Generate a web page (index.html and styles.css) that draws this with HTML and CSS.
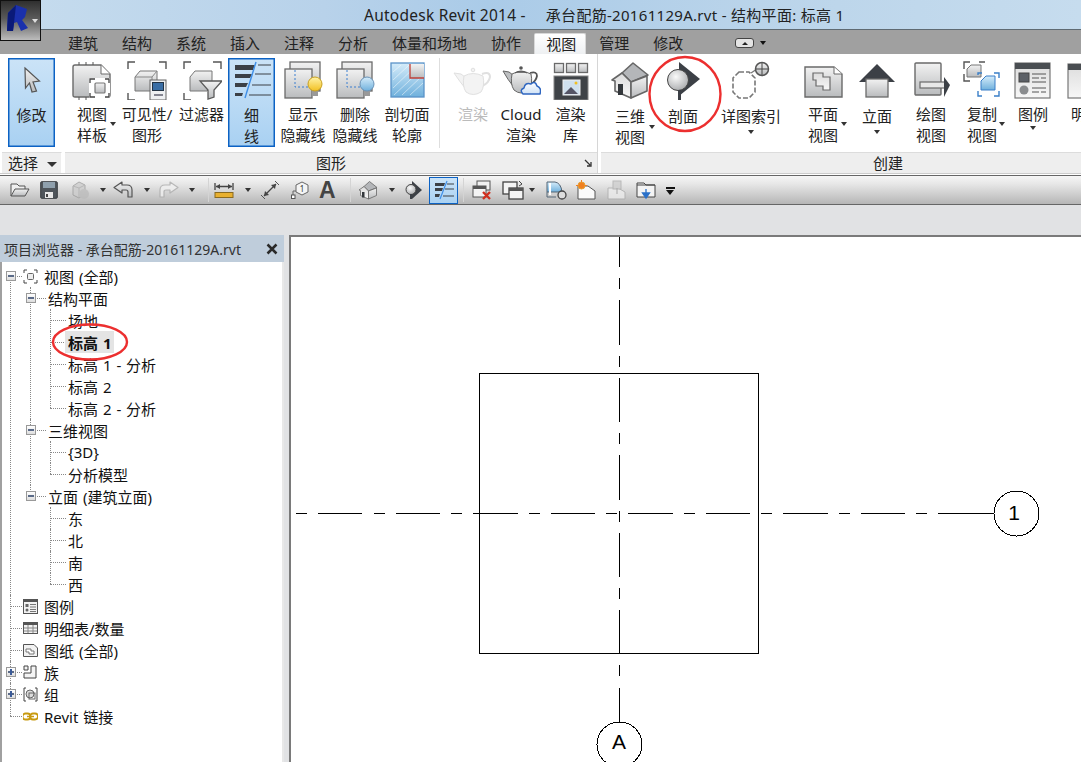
FILE: index.html
```html
<!DOCTYPE html>
<html lang="zh">
<head>
<meta charset="utf-8">
<title>Autodesk Revit 2014</title>
<link rel="stylesheet" href="styles.css">
</head>
<body>
<svg class="defs" aria-hidden="true">
  <defs>
    <linearGradient id="g" x1="0" y1="0" x2="0" y2="1"><stop offset="0" stop-color="#f2f2f2"/><stop offset="1" stop-color="#b9bbbd"/></linearGradient>
    <linearGradient id="gd" x1="0" y1="0" x2="0" y2="1"><stop offset="0" stop-color="#dcdcdc"/><stop offset="1" stop-color="#f7f7f7"/></linearGradient>
    <linearGradient id="gb" x1="0" y1="0" x2="0" y2="1"><stop offset="0" stop-color="#d5ecfa"/><stop offset="1" stop-color="#6fb0dc"/></linearGradient>
    <linearGradient id="gy" x1="0" y1="0" x2="0" y2="1"><stop offset="0" stop-color="#fff3a8"/><stop offset="1" stop-color="#f2c020"/></linearGradient>
    <radialGradient id="gs" cx=".4" cy=".35" r=".7"><stop offset="0" stop-color="#fafafa"/><stop offset="1" stop-color="#a9abad"/></radialGradient>
    <linearGradient id="gc" x1="0" y1="0" x2="0" y2="1"><stop offset="0" stop-color="#ffffff"/><stop offset="1" stop-color="#cfe2f6"/></linearGradient>
    <symbol id="house" viewBox="0 0 40 40">
      <path d="M12 13 23 3 38 15 21 22Z" fill="#b4b6b9" stroke="#666" stroke-width="1.6" stroke-linejoin="round"/>
      <path d="M2 20 12 13 21 22V38L5 31V21Z" fill="url(#gd)" stroke="#666" stroke-width="1.6" stroke-linejoin="round"/>
      <path d="M21 22 37 16V31L21 38Z" fill="url(#g)" stroke="#666" stroke-width="1.6" stroke-linejoin="round"/>
      <rect x="8" y="24" width="5" height="11" fill="#33373b"/>
    </symbol>
  </defs>
</svg>

<header class="titlebar">
  <div class="appbtn">
    <svg width="28" height="30" viewBox="0 0 28 30"><path d="M2 26 3 8 11 0 22 4 20 12 17 15 23 23 16 26 12 17 9 18 8 26Z" fill="#1a30ac"/><path d="M3 8 11 0 10 9 9 18 8 26 2 26Z" fill="#0a1a78"/></svg>
    <span class="caret caret-app"></span>
  </div>
  <div class="title"><span class="t1">Autodesk Revit 2014 -</span><span class="t2">承台配筋-20161129A.rvt - 结构平面: 标高 1</span></div>
</header>

<nav class="tabs">
  <span class="tab">建筑</span><span class="tab">结构</span><span class="tab">系统</span><span class="tab">插入</span><span class="tab">注释</span><span class="tab">分析</span><span class="tab">体量和场地</span><span class="tab">协作</span><span class="tab active">视图</span><span class="tab">管理</span><span class="tab">修改</span>
  <span class="collapse"><span class="collapse-up"></span></span><span class="caret caret-tab"></span>
</nav>

<section class="ribbon">
  <div class="panel p-select">
    <div class="tools pad8">
      <div class="tool w47 on">
        <svg class="ico" width="40" height="40" viewBox="0 0 40 40"><path d="M13 8 27.5 21 21 22 24.5 31 20 32 17.5 23 13.5 28Z" fill="url(#g)" stroke="#555" stroke-width="1.2"/></svg>
        <div class="lbl">修改</div>
      </div>
    </div>
    <div class="plabel">选择 <span class="caret caret-sel"></span></div>
  </div>

  <div class="panel p-graphics">
    <div class="tools pad6">
      <div class="tool w46">
        <svg class="ico" width="40" height="40" viewBox="0 0 40 40"><path d="M3 5H29L38 14V35Q38 37 36 37H3Q1 37 1 35V7Q1 5 3 5Z" fill="url(#g)" stroke="#6a6a6a" stroke-width="1.4"/><path d="M29 5V14H38" fill="#fff" stroke="#6a6a6a"/><path d="M7 2V5M14 2V5M21 2V5M7 37V40M14 37V40" stroke="#555"/><rect x="17" y="18" width="21" height="20" fill="#fff"/><path d="M18 23V19H23M33 19H37V23M37 33V37H33M23 37H18V33" fill="none" stroke="#444" stroke-width="1.3"/><rect x="23" y="23" width="10" height="10" rx="1" fill="url(#g)" stroke="#777" stroke-width="1.2"/></svg>
        <div class="lbl">视图<br>样板</div><span class="caret caret-side c1"></span>
      </div>
      <div class="tool w64">
        <svg class="ico" width="40" height="40" viewBox="0 0 40 40"><path d="M1 9V2H8M32 2H39V9M1 33V40H8" fill="none" stroke="#555" stroke-width="1.4"/><path d="M8 17 13 11H30V26L25 31H8Z" fill="url(#g)" stroke="#777"/><path d="M8 17H25V31M25 17 30 11" fill="none" stroke="#888"/><rect x="23" y="20" width="16" height="20" fill="#eef0f2" stroke="#666"/><rect x="25.500" y="22.500" width="11" height="8" fill="#3a6ea5" stroke="#234"/><path d="M27 35H36" stroke="#556" stroke-width="1.4"/></svg>
        <div class="lbl">可见性/<br>图形</div>
      </div>
      <div class="tool w45">
        <svg class="ico" width="40" height="40" viewBox="0 0 40 40"><path d="M2 9V2H9M31 2H39V9M2 33V40H9" fill="none" stroke="#555" stroke-width="1.4"/><path d="M8 17 13 11H30V26L25 31H8Z" fill="url(#g)" stroke="#777"/><path d="M18 21H40L32 30V37L26 39V30Z" fill="url(#g)" stroke="#5a5a5a" stroke-width="1.3"/></svg>
        <div class="lbl">过滤器</div>
      </div>
      <div class="tool w47 on mgap">
        <svg class="ico" width="40" height="40" viewBox="0 0 40 40"><path d="M3 5H23L21 10H3ZM3 14H20L18 18H3ZM3 23H16L14 27H3ZM3 33H11L10 36H3Z" fill="#3c4046"/><path d="M24 2 13 38" stroke="#3f8fe8" stroke-width="1.4"/><path d="M26 5H39M23 14H39M20 25H39M17 35H39" stroke="#3c4046" stroke-width="1.2"/></svg>
        <div class="lbl">细<br>线</div>
      </div>
      <div class="tool w52">
        <svg class="ico" width="40" height="40" viewBox="0 0 40 40"><rect x="7" y="2" width="30" height="29" fill="url(#g)" stroke="#6a6a6a" stroke-width="1.3"/><rect x="2" y="9" width="27" height="29" fill="url(#g)" stroke="#6a6a6a" stroke-width="1.3"/><path d="M12 10V27H30" fill="none" stroke="#3a7fd0" stroke-dasharray="2 2"/><path d="M29 30h6v6h-6z" fill="#999"/><circle cx="32" cy="24" r="7" fill="url(#gy)" stroke="#c8a020"/></svg>
        <div class="lbl">显示<br>隐藏线</div>
      </div>
      <div class="tool w52">
        <svg class="ico" width="40" height="40" viewBox="0 0 40 40"><rect x="7" y="2" width="30" height="29" fill="url(#g)" stroke="#6a6a6a" stroke-width="1.3"/><rect x="2" y="9" width="27" height="29" fill="url(#g)" stroke="#6a6a6a" stroke-width="1.3"/><path d="M12 10V27H30" fill="none" stroke="#3a7fd0" stroke-dasharray="2 2"/><path d="M29 30h6v6h-6z" fill="#999"/><circle cx="32" cy="24" r="7" fill="url(#gb)" stroke="#6a93b8"/></svg>
        <div class="lbl">删除<br>隐藏线</div>
      </div>
      <div class="tool w52">
        <svg class="ico" width="40" height="40" viewBox="0 0 40 40"><rect x="4" y="3" width="33" height="34" fill="url(#gb)" stroke="#5a93c8" stroke-width="1.3"/><path d="M6 12 14 5M6 20 22 5M6 28 30 5M7 35 37 7M15 35 36 15M23 35 36 23" stroke="#fff" stroke-width=".7" opacity=".7"/><rect x="23" y="4" width="14" height="14" fill="url(#g)"/><path d="M23 4V18H37" fill="none" stroke="#c04038" stroke-width="1.3"/></svg>
        <div class="lbl">剖切面<br>轮廓</div>
      </div>
      <span class="vsep"></span>
      <div class="tool w52 off">
        <svg class="ico" width="40" height="40" viewBox="0 0 40 40"><g fill="#f3f3f3" stroke="#e0e0e0"><path d="M29 14Q37 11 37 17 36 23 29 26" fill="none" stroke-width="2"/><path d="M1 13 8 14 12 17V28Q7 22 1 13Z"/><path d="M11 16Q20 11 30 16 32 26 28 32 20 37 13 32 9 26 11 16Z"/><circle cx="20" cy="10" r="1.800"/></g></svg>
        <div class="lbl">渲染</div>
      </div>
      <div class="tool w44">
        <svg class="ico" width="40" height="40" viewBox="0 0 40 40"><path d="M29 13Q36 11 36 16 35 21 30 24" fill="none" stroke="#555" stroke-width="1.800"/><path d="M2 11 8 12 12 15V26Q7 20 2 11Z" fill="#bdbfc1" stroke="#666"/><path d="M11 14Q20 9 30 14 32 24 28 30 20 36 13 30 9 24 11 14Z" fill="url(#g)" stroke="#666"/><path d="M14 13Q20 9 26 13" fill="#777" stroke="#555"/><circle cx="20" cy="8" r="1.800" fill="#555"/><path d="M22 34Q18 30 23 28 24 22 30 24 34 20 36 26 41 28 39 34Z" fill="url(#gc)" stroke="#2f66c0" stroke-width="1.500" stroke-linejoin="round"/></svg>
        <div class="lbl">Cloud<br>渲染</div>
      </div>
      <div class="tool w55">
        <svg class="ico" width="40" height="40" viewBox="0 0 40 40"><rect x="3.500" y="3.500" width="9" height="9" fill="url(#g)" stroke="#6a6a6a" stroke-width="1.300"/><rect x="15.500" y="3.500" width="9" height="9" fill="url(#g)" stroke="#6a6a6a" stroke-width="1.300"/><rect x="27.500" y="3.500" width="9" height="9" fill="url(#g)" stroke="#6a6a6a" stroke-width="1.300"/><rect x="3" y="16" width="34" height="24" fill="#3f4347" stroke="#888"/><rect x="12" y="20" width="17" height="15" fill="#cfe0ee" stroke="#eee"/><path d="M13 34 20 27 27 34Z" fill="#556"/><circle cx="25" cy="23" r="1.500" fill="#f2c020"/></svg>
        <div class="lbl">渲染<br>库</div>
      </div>
    </div>
    <div class="plabel">图形<span class="launcher"><svg width="8" height="8" viewBox="0 0 8 8"><path d="M1 1 6 6M7 3V7H3" fill="none" stroke="#333" stroke-width="1.3"/></svg></span></div>
  </div>

  <div class="panel p-create">
    <div class="tools pad6">
      <div class="tool w50 low">
        <svg class="ico" width="40" height="40" viewBox="0 0 40 40"><use href="#house"/></svg>
        <div class="lbl">三维<br>视图</div><span class="caret caret-side c2"></span>
      </div>
      <div class="tool w56 low">
        <svg class="ico" width="40" height="40" viewBox="0 0 40 40"><path d="M16 2 37 19 16 36Z" fill="#3c4046"/><circle cx="15" cy="20" r="10.500" fill="url(#gs)" stroke="#444" stroke-width="1"/><rect x="15" y="30" width="3" height="10" fill="#3c4046"/></svg>
        <div class="lbl">剖面</div>
      </div>
      <div class="tool w80 low">
        <svg class="ico wide" width="46" height="40" viewBox="0 0 46 40"><path d="M11 12H21L27 18V32L21 38H11L5 32V18Z" fill="#fff" stroke="#777" stroke-width="1.6" stroke-dasharray="5 2"/><path d="M23 13 29 9" stroke="#777" stroke-width="1.4"/><circle cx="34" cy="9" r="6.500" fill="url(#g)" stroke="#555" stroke-width="1.500"/><path d="M28 9H40M34 3V15" stroke="#444"/></svg>
        <div class="lbl">详图索引</div><span class="caret caret-under"></span>
      </div>
      <div class="tool w64">
        <svg class="ico" width="40" height="40" viewBox="0 0 40 40"><path d="M2 7H31L39 14V37H2Z" fill="url(#g)" stroke="#6a6a6a" stroke-width="1.4"/><path d="M31 7V14H39" fill="#fff" stroke="#6a6a6a"/><path d="M10 13H20V17H27V30H20V26H13V20H10Z" fill="url(#gd)" stroke="#6a6a6a" stroke-width="1.2"/></svg>
        <div class="lbl">平面<br>视图</div><span class="caret caret-side c3"></span>
      </div>
      <div class="tool w44 low">
        <svg class="ico" width="40" height="40" viewBox="0 0 40 40"><path d="M20 4 38 22H2Z" fill="#3c4046"/><rect x="9" y="19" width="22" height="18" fill="url(#g)" stroke="#6a6a6a" stroke-width="1.3"/></svg>
        <div class="lbl">立面</div><span class="caret caret-under"></span>
      </div>
      <div class="tool w64">
        <svg class="ico" width="40" height="40" viewBox="0 0 40 40"><rect x="4" y="3" width="26" height="32" rx="1" fill="url(#g)" stroke="#6a6a6a" stroke-width="1.4"/><rect x="9" y="22" width="26" height="6" fill="#e8e8e8" stroke="#6a6a6a" stroke-width="1.2"/><path d="M33 17 39 25 33 37Z" fill="#3c4046"/></svg>
        <div class="lbl">绘图<br>视图</div>
      </div>
      <div class="tool w38">
        <svg class="ico" width="40" height="40" viewBox="0 0 40 40"><path d="M2 9V2H8M17 2H23" fill="none" stroke="#555" stroke-width="1.4"/><path d="M2 14V21H8" fill="none" stroke="#555" stroke-width="1.4"/><path d="M5 9 9 5H19V17H5Z" fill="url(#g)" stroke="#777"/><path d="M16 15V13H20M32 13H37V18M37 31V36H32M20 36H16V31" fill="none" stroke="#3a7fc8" stroke-width="1.4"/><path d="M19 21 24 16H33V30H19Z" fill="url(#gb)" stroke="#3a7fc8"/></svg>
        <div class="lbl">复制<br>视图</div><span class="caret caret-side c4"></span>
      </div>
      <div class="tool w64">
        <svg class="ico" width="40" height="40" viewBox="0 0 40 40"><rect x="2" y="3" width="35" height="35" fill="url(#gd)" stroke="#777" stroke-width="1.2"/><rect x="2" y="3" width="35" height="6" fill="#4a4e52"/><rect x="6" y="13" width="10" height="9" fill="#5c6066" stroke="#444"/><circle cx="11" cy="30" r="4.5" fill="#8a8c8e"/><path d="M19 14H33M19 18H26M28 18H33M19 22H33M19 28H33M19 32H26M28 32H33" stroke="#555"/></svg>
        <div class="lbl">图例</div><span class="caret caret-under c5"></span>
      </div>
      <div class="tool w42">
        <svg class="ico" width="40" height="40" viewBox="0 0 40 40"><rect x="2" y="4" width="36" height="34" fill="url(#gd)" stroke="#777" stroke-width="1.2"/><rect x="2" y="4" width="36" height="6" fill="#4a4e52"/></svg>
        <div class="lbl">明细</div>
      </div>
    </div>
    <div class="plabel pl-create">创建</div>
  </div>
</section>
<div class="ribbon-foot"></div>

<div class="qat">
  <span class="q w30"><svg width="20" height="18" viewBox="0 0 20 18"><path d="M1 15V3H7L9 5H15V8" fill="#f0f0f0" stroke="#555"/><path d="M1 15 5 8H19L15 15Z" fill="url(#g)" stroke="#555"/></svg></span>
  <span class="q w30"><svg width="18" height="18" viewBox="0 0 18 18"><rect x=".7" y=".7" width="16.6" height="16.6" rx="1" fill="#4f555b" stroke="#3a3e42"/><rect x="3" y="1" width="12" height="6" fill="#8fa0ad"/><rect x="5" y="11" width="8" height="6" fill="#e8e8e8"/><rect x="6" y="13" width="2" height="3" fill="#444"/></svg></span>
  <span class="q w30 dim"><svg width="20" height="20" viewBox="0 0 20 20"><path d="M3 6 9 2 15 5V14L9 18 3 15Z" fill="#ccc" stroke="#999"/><path d="M9 8V18M3 6 9 8 15 5" stroke="#aaa" fill="none"/><circle cx="14" cy="14" r="5" fill="#bbb"/></svg></span>
  <span class="q w13"><span class="caret"></span></span>
  <span class="q w31"><svg width="20" height="18" viewBox="0 0 20 18"><path d="M9 1 1 6.500 9 12V9H13Q15 9 15 11V16H19V9Q19 4 14 4H9Z" fill="url(#g)" stroke="#555" stroke-linejoin="round" stroke-width="1.200"/></svg></span>
  <span class="q w15"><span class="caret"></span></span>
  <span class="q w30 dim"><svg width="20" height="18" viewBox="0 0 20 18"><path d="M11 1 19 6.500 11 12V9H7Q5 9 5 11V16H1V9Q1 4 6 4H11Z" fill="#f2f2f2" stroke="#aaa" stroke-linejoin="round" stroke-width="1.200"/></svg></span>
  <span class="q w19"><span class="caret"></span></span>
  <span class="qsep"></span>
  <span class="q w31"><svg width="20" height="18" viewBox="0 0 20 18"><path d="M1 2V9M19 2V9M2 5.500H18" stroke="#444" stroke-width="1.300"/><path d="M2 5.500 6 3V8ZM18 5.500 14 3V8Z" fill="#444"/><rect x="1" y="11.500" width="18" height="5" fill="#e8b030" stroke="#8a6a20"/></svg></span>
  <span class="q w15"><span class="caret"></span></span>
  <span class="q w30"><svg width="20" height="20" viewBox="0 0 20 20"><path d="M4 16 16 4" stroke="#444" stroke-width="1.3"/><path d="M4 16 5 11 9 15ZM16 4 11 5 15 9Z" fill="#444"/><path d="M1 15 5 19M15 1 19 5" stroke="#555"/></svg></span>
  <span class="q w29"><svg width="20" height="20" viewBox="0 0 20 20"><path d="M12 2 18 5V12L12 15 6 12V5Z" fill="#f4f4f4" stroke="#666"/><path d="M3 17V11H6" fill="none" stroke="#666"/><rect x="1.5" y="15" width="3.5" height="3.5" fill="#fff" stroke="#555"/><text class="qtxt" x="12" y="12">1</text></svg></span>
  <span class="q w31 qa">A</span>
  <span class="qsep"></span>
  <span class="q w31 sl"><svg width="20" height="20" viewBox="0 0 40 40"><use href="#house"/></svg></span>
  <span class="q w13"><span class="caret"></span></span>
  <span class="q w27 ind"><svg width="18" height="18" viewBox="0 0 18 18"><path d="M8 0 18 9 8 18Z" fill="#3c4046"/><circle cx="7" cy="8.500" r="5" fill="url(#gs)" stroke="#444"/><rect x="6" y="13" width="2" height="5" fill="#3c4046"/></svg></span>
  <span class="qon"><svg width="22" height="20" viewBox="0 0 22 20"><path d="M2 3H12L11 6H2ZM2 8H10L9 11H2ZM2 14H7L6 17H2Z" fill="#3c4046"/><path d="M14 1 7 19" stroke="#3f8fe8" stroke-width="1.2"/><path d="M14 4H21M12 9H21M10 16H21" stroke="#3c4046"/></svg></span>
  <span class="qsep s2"></span>
  <span class="q w30"><svg width="21" height="20" viewBox="0 0 21 20"><rect x="5" y="1" width="13" height="9" fill="#f0f0f0" stroke="#555"/><rect x="1" y="6" width="13" height="11" fill="#f4f4f4" stroke="#555"/><rect x="1" y="6" width="13" height="3" fill="#555"/><path d="M11 12 18 19M18 12 11 19" stroke="#d03020" stroke-width="2.4"/></svg></span>
  <span class="q w27"><svg width="22" height="20" viewBox="0 0 22 20"><rect x="1" y="2" width="14" height="12" fill="#f4f4f4" stroke="#444" stroke-width="1.3"/><rect x="7" y="8" width="14" height="11" fill="#f4f4f4" stroke="#444" stroke-width="1.3"/><rect x="7" y="8" width="14" height="3" fill="#555"/><path d="M17 1 20 4 17 6" fill="none" stroke="#444"/></svg></span>
  <span class="q w17"><span class="caret"></span></span>
  <span class="q w30"><svg width="21" height="20" viewBox="0 0 21 20"><path d="M1 2H9Q15 3 16 12H1Z" fill="url(#gb)" stroke="#567"/><path d="M1 12V17H10" fill="none" stroke="#567"/><path d="M4 3V15" stroke="#fff" stroke-width="2"/><circle cx="16" cy="15" r="4" fill="#ddd" stroke="#444" stroke-width="1.3"/></svg></span>
  <span class="q w30"><svg width="20" height="20" viewBox="0 0 20 20"><path d="M2 6H12L19 11V19H2Z" fill="#fafafa" stroke="#555"/><circle cx="5.5" cy="5.5" r="3.5" fill="#f08020" stroke="#e8a030"/><path d="M5.500 0V2M0 5.500H2M9 5.500H11" stroke="#f08020"/></svg></span>
  <span class="q w30 dim"><svg width="20" height="20" viewBox="0 0 20 20"><path d="M2 8H12L19 12V19H2Z" fill="#eee" stroke="#aaa"/><rect x="7" y="1" width="8" height="8" fill="#ccc" stroke="#aaa"/><path d="M11 14V8" stroke="#999"/></svg></span>
  <span class="q w30"><svg width="20" height="20" viewBox="0 0 20 20"><path d="M1 3H8L10 5H19V17H1Z" fill="#f4f4f4" stroke="#444"/><path d="M1 5H19" stroke="#444"/><path d="M10 9V15M6.500 13 10 18 13.500 13Z" fill="#2a70c8" stroke="#2a70c8" stroke-width="1.300"/></svg></span>
  <span class="q w12"><span class="qlist"></span></span>
</div>
<div class="strip"></div>

<main class="workspace">
  <aside class="browser">
    <div class="bhead"><span>项目浏览器 - 承台配筋-20161129A.rvt</span><svg width="12" height="12" viewBox="0 0 12 12"><path d="M1.500 1.500 10.500 10.500M10.500 1.500 1.500 10.500" stroke="#2a2a2a" stroke-width="2.500"/></svg></div>
    <ul class="tree root">
      <li><span class="exp"></span><span class="node"><svg width="15" height="15" viewBox="0 0 15 15"><path d="M1 4V1H4M11 1H14V4M14 11V14H11M4 14H1V11" fill="none" stroke="#444"/><rect x="4.500" y="4.500" width="6" height="6" rx="1" fill="#eee" stroke="#666"/></svg>视图 (全部)</span>
        <ul class="tree l1">
          <li><span class="exp"></span><span class="node">结构平面</span>
            <ul class="tree l2">
              <li><span class="node">场地</span></li>
              <li><span class="node sel">标高 1</span></li>
              <li><span class="node">标高 1 - 分析</span></li>
              <li><span class="node">标高 2</span></li>
              <li><span class="node">标高 2 - 分析</span></li>
            </ul>
          </li>
          <li><span class="exp"></span><span class="node">三维视图</span>
            <ul class="tree l2">
              <li><span class="node">{3D}</span></li>
              <li><span class="node">分析模型</span></li>
            </ul>
          </li>
          <li><span class="exp"></span><span class="node">立面 (建筑立面)</span>
            <ul class="tree l2">
              <li><span class="node">东</span></li>
              <li><span class="node">北</span></li>
              <li><span class="node">南</span></li>
              <li><span class="node">西</span></li>
            </ul>
          </li>
        </ul>
      </li>
      <li><span class="node"><svg width="15" height="15" viewBox="0 0 15 15"><rect x=".5" y=".5" width="14" height="14" fill="#f2f2f2" stroke="#555"/><rect x="1" y="1" width="13" height="2" fill="#555"/><rect x="2.500" y="5" width="3" height="3" fill="#666"/><circle cx="4" cy="11" r="1.500" fill="#666"/><path d="M7 5.500H13M7 8H13M7 10.500H13M7 12.500H13" stroke="#777"/></svg>图例</span></li>
      <li><span class="node"><svg width="15" height="15" viewBox="0 0 15 15"><rect x=".5" y="1.500" width="14" height="11" fill="#f2f2f2" stroke="#555"/><rect x="1" y="2" width="13" height="2" fill="#555"/><path d="M1 7H14M1 10H14M5 4V12M10 4V12" stroke="#888"/></svg>明细表/数量</span></li>
      <li><span class="node"><svg width="15" height="15" viewBox="0 0 15 15"><path d="M.5 1.500H11L14.500 5V13.500H.5Z" fill="#f2f2f2" stroke="#555"/><path d="M3 6H8V8H11V11H6V9H3Z" fill="#fff" stroke="#777"/></svg>图纸 (全部)</span></li>
      <li><span class="exp plus"></span><span class="node"><svg width="15" height="15" viewBox="0 0 15 15"><path d="M8 1H13V13H1V8H8Z" fill="#f4f4f4" stroke="#444"/><path d="M1 5V1H5V5Z" fill="#f4f4f4" stroke="#444"/></svg>族</span></li>
      <li><span class="exp plus"></span><span class="node"><svg width="15" height="15" viewBox="0 0 15 15"><path d="M3 1H1V14H3M12 1H14V14H12" fill="none" stroke="#444"/><circle cx="7" cy="7" r="4" fill="#ddd" stroke="#666"/><rect x="6" y="6" width="6" height="6" fill="none" stroke="#666"/></svg>组</span></li>
      <li><span class="node"><svg width="15" height="15" viewBox="0 0 15 15"><rect x="-.5" y="4.500" width="8" height="6" rx="3" fill="none" stroke="#c89a10" stroke-width="1.800"/><rect x="7" y="4.500" width="8" height="6" rx="3" fill="none" stroke="#c89a10" stroke-width="1.800"/><path d="M4 7.500H11" stroke="#c89a10" stroke-width="1.500"/></svg>Revit 链接</span></li>
    </ul>
  </aside>
  <div class="gutter"></div>
  <div class="canvas">
    <svg class="draw" width="790" height="525" viewBox="291 237 790 525">
      <rect class="ln" x="479.500" y="373.500" width="279" height="280"/>
      <path class="ln" d="M296 513.500H307M318 513.500H362M374 513.500H385M396 513.500H440M451 513.500H462M473 513.500H518M529 513.500H540M551 513.500H595M606 513.500H617M628 513.500H673M684 513.500H695M706 513.500H750M761 513.500H772M783 513.500H828M839 513.500H850M861 513.500H905M916 513.500H927M938 513.500H994"/>
      <path class="ln" d="M619.500 237V267M619.500 278V289M619.500 300V345M619.500 356V367M619.500 378V422M619.500 433V444M619.500 455V500M619.500 511V522M619.500 533V577M619.500 588V599M619.500 610V654M619.500 665V676M619.500 688V722"/>
      <circle class="ln" cx="1016.500" cy="513.500" r="22.500"/>
      <circle class="ln" cx="619.500" cy="744.500" r="22.500"/>
      <text class="mark" x="1014" y="520">1</text>
      <text class="mark" x="619" y="749">A</text>
    </svg>
  </div>
</main>

<svg class="ring ring-a" width="80" height="84" viewBox="0 0 80 84"><ellipse cx="40" cy="42" rx="35.500" ry="37" fill="none" stroke="#ec2f2f" stroke-width="2.400"/></svg>
<svg class="ring ring-b" width="84" height="44" viewBox="0 0 84 44"><ellipse cx="42" cy="22" rx="37" ry="17.500" fill="none" stroke="#ec2f2f" stroke-width="2.400"/></svg>
</body>
</html>
```

FILE: styles.css
```css
* { box-sizing: border-box; }
html, body { margin: 0; padding: 0; }
body {
  width: 1081px;
  height: 762px;
  overflow: hidden;
  position: relative;
  background: #e1e2e4;
  color: #222;
  font-family: "Noto Sans", "Noto Sans CJK SC", sans-serif;
  font-size: 15px;
}
.defs { position: absolute; width: 0; height: 0; }
svg { display: block; flex: none; }

.caret {
  display: inline-block;
  width: 0;
  height: 0;
  border-left: 3.5px solid transparent;
  border-right: 3.5px solid transparent;
  border-top: 4px solid #333;
}

/* title */
.titlebar {
  height: 30px;
  border-bottom: 1px solid #5f6a72;
  background: linear-gradient(90deg, #c6dcee 0%, #b8d2ea 30%, #aacbe8 45%, #bad4ea 70%, #c6dcee 100%);
  position: relative;
}
.appbtn {
  position: absolute;
  left: 0;
  top: 0;
  width: 41px;
  height: 41px;
  border: 1px solid #111;
  background: linear-gradient(#2f2f2f, #5a5a5a 45%, #bcbcbc);
  z-index: 3;
  padding: 4px 0 0 4px;
}
.caret-app { position: absolute; left: 31px; top: 18px; border-top-color: #ddd; }
.title {
  display: flex;
  height: 29px;
  align-items: center;
  padding-left: 364px;
  white-space: nowrap;
  color: #222;
}
.t1 { font-size: 15.500px; letter-spacing: .25px; }
.t2 { margin-left: 20px; letter-spacing: .3px; }

/* tabs */
.tabs {
  height: 24px;
  background: #a0a0a0;
  display: flex;
  align-items: stretch;
  padding-left: 56px;
  position: relative;
}
.tab {
  padding: 0 12px;
  line-height: 26px;
  height: 24px;
  white-space: nowrap;
  color: #222;
}
.tab.active {
  width: 52px;
  margin: 3px 1px 0;
  padding: 0 11px;
  height: 21px;
  line-height: 20px;
  background: linear-gradient(#fff, #eef0f2);
  border: 1px solid #d8d8d8;
  border-bottom: 0;
  border-radius: 2px 2px 0 0;
}
.collapse {
  width: 19px;
  height: 10px;
  margin: 8px 0 0 40px;
  border: 1px solid #444;
  border-radius: 3px;
  background: #e4e4e4;
  display: flex;
  justify-content: center;
  align-items: center;
}
.collapse-up {
  border-left: 3px solid transparent;
  border-right: 3px solid transparent;
  border-bottom: 3px solid #222;
}
.caret-tab { margin: 11px 0 0 6px; border-top-color: #111; }

/* ribbon */
.ribbon {
  height: 119px;
  background: #fff;
  display: flex;
  overflow: hidden;
}
.panel { border-right: 1px solid #d6d6d6; margin-right: 1px; flex: none; }
.p-select { width: 62px; margin-right: 1px; border-right: 0; }
.p-graphics { width: 535px; }
.p-create { flex: 1; border-right: 0; margin-right: 0; overflow: hidden; }
.tools { height: 98px; display: flex; align-items: flex-start; }
.pad8 { padding-left: 8px; }
.pad6 { padding-left: 6px; }
.plabel {
  height: 21px;
  border-top: 1px solid #dcdcdc;
  background: #eeeeee;
  margin-left: 2px;
  text-align: center;
  line-height: 20px;
  position: relative;
  white-space: nowrap;
}
.p-select .plabel { text-align: left; padding-left: 6px; border-right: 1px solid #fff; }
.pl-create { text-align: left; padding-left: 272px; }
.caret-sel { margin-left: 5px; vertical-align: 2px; border-left-width: 5px; border-right-width: 5px; border-top-width: 5px; }
.launcher { position: absolute; right: 5px; top: 6px; }

.tool {
  height: 98px;
  flex: none;
  display: flex;
  flex-direction: column;
  align-items: center;
  position: relative;
  text-align: center;
}
.ico { margin-top: 6px; }
.lbl {
  margin-top: 4px;
  line-height: 21px;
  white-space: nowrap;
}
.low .lbl { margin-top: 6px; }
.tool.on {
  margin-top: 4px;
  height: 89px;
  background: linear-gradient(#cbe3f7, #a9d1f2);
  border: 1px solid #0c62c4;
  box-shadow: inset 0 0 0 .5px #0c62c4;
}
.tool.on .ico { margin-top: 1px; }
.tool.on .lbl { margin-top: 5px; }
.mgap { margin-left: 4px; margin-right: 2px; }
.off .lbl { color: #bbb; }
.vsep { width: 1px; height: 90px; margin: 4px 7px 0 6px; background: #dedede; flex: none; }
.w12 { width: 12px; } .w13 { width: 13px; } .w15 { width: 15px; } .w17 { width: 17px; } .w19 { width: 19px; }
.w27 { width: 27px; } .w29 { width: 29px; } .w30 { width: 30px; } .w31 { width: 31px; }
.w38 { width: 38px; } .w42 { width: 42px; } .w44 { width: 44px; } .w45 { width: 45px; } .w46 { width: 46px; } .w47 { width: 47px; }
.w50 { width: 50px; } .w52 { width: 52px; } .w55 { width: 55px; } .w56 { width: 56px; } .w64 { width: 64px; } .w80 { width: 80px; }
.caret-side { position: absolute; }
.c1 { left: 41px; top: 68px; }
.c2 { left: 44px; top: 71px; }
.c3 { left: 50px; top: 68px; }
.c4 { left: 36px; top: 68px; }
.caret-under { margin-top: 3px; }
.c5 { margin-top: 1px; }

.ribbon-foot { height: 3px; background: #fff; border-top: 1px solid #ccc; border-bottom: 1px solid #666; }

/* quick access */
.qat {
  height: 29px;
  display: flex;
  align-items: center;
  padding-left: 10px;
  background: linear-gradient(#f6f6f6, #e6e6e6 30%, #b6b6b6);
  border-bottom: 1px solid #666;
}
.q { display: flex; align-items: center; height: 22px; flex: none; }
.dim { opacity: .75; }
.qsep { width: 1px; height: 24px; background: #d4d4d4; margin: 0 5px 0 0; flex: none; }
.s2 { margin-right: 8px; }
.sl { margin-left: 2px; }
.ind { padding-left: 2px; }
.qa { font-family: "Liberation Sans", sans-serif; font-size: 23px; font-weight: 700; color: #444; }
.qtxt { font-family: "Noto Sans", sans-serif; font-size: 8px; text-anchor: middle; fill: #333; }
.qon {
  width: 29px;
  height: 27px;
  flex: none;
  margin-right: 5px;
  background: linear-gradient(#cbe3f7, #a9d1f2);
  border: 1px solid #0c62c4;
  display: flex;
  align-items: center;
  justify-content: center;
}
.qlist {
  display: block;
  width: 9px;
  height: 7px;
  border-top: 2px solid #111;
  position: relative;
}
.qlist::after {
  content: "";
  position: absolute;
  left: 0;
  top: 1px;
  border-left: 4.500px solid transparent;
  border-right: 4.500px solid transparent;
  border-top: 5px solid #111;
}

.strip { height: 30px; background: #e1e2e4; }

/* workspace */
.workspace { height: 527px; display: flex; }
.browser { width: 284px; flex: none; background: #fff; border-left: 2px solid #a0a0a0; border-right: 2px solid #e8e8e8; }
.bhead {
  height: 27px;
  margin-left: -2px;
  margin-right: -2px;
  background: #bfcddb;
  display: flex;
  align-items: center;
  justify-content: space-between;
  padding: 0 6px 0 4px;
  font-size: 14px;
  color: #333;
  white-space: nowrap;
}
.gutter { width: 5px; flex: none; background: #e1e2e4; }
.canvas { flex: 1; background: #fff; border-left: 2px solid #7a7a7a; border-top: 2px solid #7a7a7a; overflow: hidden; }
.draw { shape-rendering: crispEdges; }
.ln { fill: none; stroke: #000; stroke-width: 1; }
.mark { font-family: "Liberation Sans", sans-serif; font-size: 21px; text-anchor: middle; fill: #000; }

/* tree */
.tree { list-style: none; margin: 0; padding: 0; }
.root { margin: 3px 0 0 8px; }
.tree li { position: relative; }
.tree li::before {
  content: "";
  position: absolute;
  left: 0;
  top: 0;
  bottom: 0;
  border-left: 1px dotted #888;
}
.tree li:last-child::before { bottom: auto; height: 11px; }
.root > li:first-child::before { top: 11px; }
.tree li::after {
  content: "";
  position: absolute;
  left: 0;
  top: 11px;
  width: 16px;
  border-top: 1px dotted #888;
}
.root > li { padding-left: 34px; }
.l1 { margin-left: -14px; }
.l1 > li { padding-left: 18px; }
.l2 { margin-left: 2px; }
.l2 > li { padding-left: 18px; }
.node {
  display: flex;
  align-items: center;
  gap: 6px;
  height: 22px;
  width: max-content;
  position: relative;
  z-index: 1;
  white-space: nowrap;
  word-spacing: 1px;
  color: #111;
}
.node svg { margin-left: -21px; background: #fff; }
.sel {
  font-weight: 700;
  background: #e4e4e4;
  padding: 0 3px;
  margin-left: -3px;
}
.exp {
  position: absolute;
  left: -4px;
  top: 6px;
  width: 10px;
  height: 10px;
  border: 1px solid #999;
  background: linear-gradient(#fff, #ddd);
  z-index: 2;
}
.exp::before {
  content: "";
  position: absolute;
  left: 1px;
  top: 3px;
  width: 6px;
  height: 2px;
  background: #5a6a88;
}
.plus::after {
  content: "";
  position: absolute;
  left: 3px;
  top: 1px;
  width: 2px;
  height: 6px;
  background: #3a5a98;
}

/* red hand-drawn rings */
.ring { position: absolute; z-index: 5; }
.ring-a { left: 645px; top: 52px; }
.ring-b { left: 48px; top: 320px; }
```
